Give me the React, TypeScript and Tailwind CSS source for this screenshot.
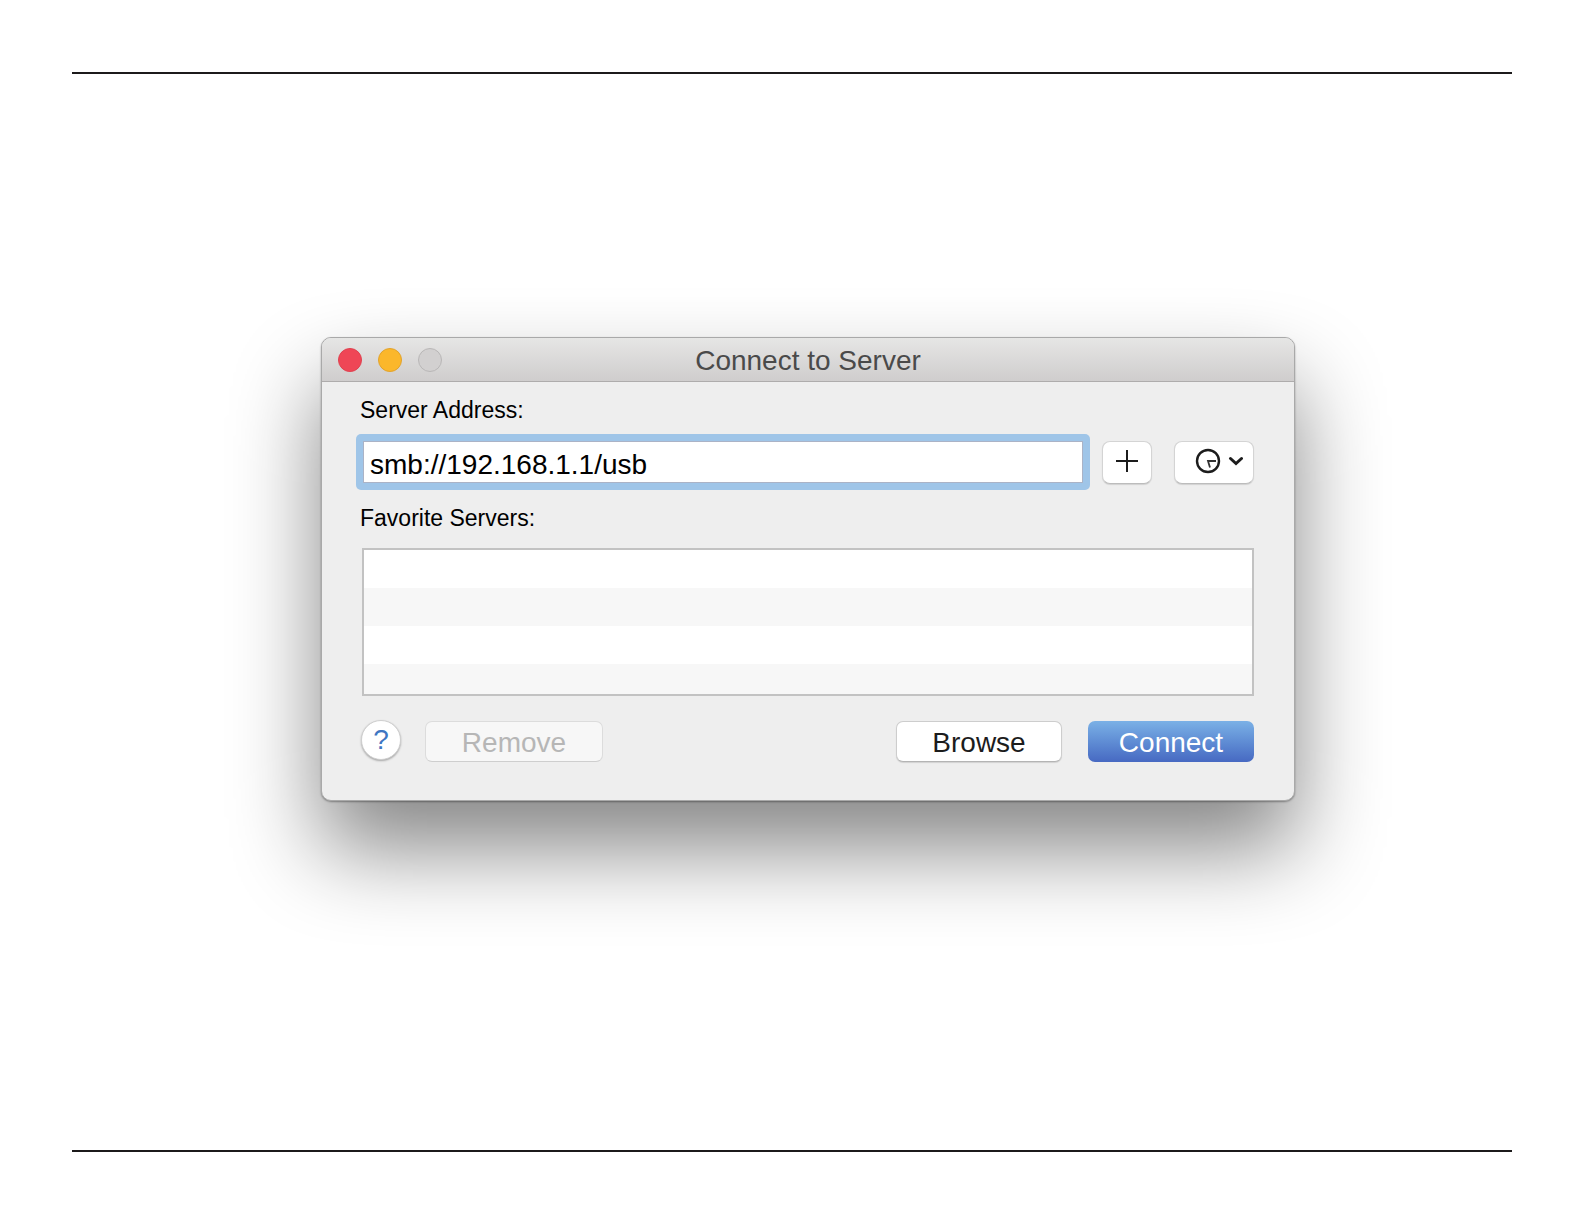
import { useState } from "react";

const rows = ["bg-white", "bg-[#f7f7f7]", "bg-white", "bg-[#f7f7f7]"];

function TitleBar() {
  return (
    <header className="relative flex h-11 items-center justify-center rounded-t-[9px] border-b border-[#aeacac] bg-gradient-to-b from-[#e6e6e5] to-[#cfcdcd]">
      <div className="absolute left-4 flex gap-4">
        <button type="button" aria-label="Close" className="size-6 rounded-full border border-[#e0414f] bg-[#ef4656]" />
        <button type="button" aria-label="Minimize" className="size-6 rounded-full border border-[#e2a32c] bg-[#fbb72b]" />
        <button type="button" aria-label="Zoom" disabled className="size-6 rounded-full border border-[#b9b7b7] bg-[#d2d0d0]" />
      </div>
      <h1 className="pt-[2px] text-[28px] leading-8 text-[#4a4a4a]">Connect to Server</h1>
    </header>
  );
}

function PlusIcon() {
  return (
    <svg viewBox="0 0 24 24" className="size-6" fill="none" stroke="#1c1c1c" strokeWidth="2">
      <path d="M12 1v22M1 12h22" />
    </svg>
  );
}

function RecentIcon() {
  return (
    <svg viewBox="0 0 48 26" className="h-[26px] w-12" fill="none" stroke="#1c1c1c">
      <circle cx="13" cy="13" r="11" strokeWidth="2.4" />
      <path d="M21 13H13l2 6.500" strokeWidth="1.8" stroke="#333" />
      <path d="M35.500 10.500l5.500 5 5.500-5" strokeWidth="3" strokeLinecap="round" />
    </svg>
  );
}

export default function App() {
  const [address, setAddress] = useState("smb://192.168.1.1/usb");

  return (
    <div className="flex min-h-screen flex-col bg-white p-[72px] font-['Liberation_Sans',Arial,sans-serif] text-black">
      <main className="flex grow flex-col items-center border-y-2 border-[#1c1a1b] pt-[263px] pl-8">
        <section className="w-full max-w-[974px] rounded-[10px] border border-[#a9a9a9] bg-[#eeeeee] shadow-[0_48px_88px_rgba(0,0,0,0.48),0_1px_2px_rgba(0,0,0,0.35)]">
          <TitleBar />
          <form className="flex flex-col px-[34px] pt-[14px] pb-[38px]" onSubmit={(e) => e.preventDefault()}>
            <label htmlFor="address" className="pl-1 text-[23px] leading-7">
              Server Address:
            </label>
            <div className="mt-[10px] flex items-center">
              <div className="flex h-14 grow rounded-[5px] bg-[#9fc5e8] p-[7px]">
                <input
                  id="address"
                  type="text"
                  value={address}
                  onChange={(e) => setAddress(e.target.value)}
                  className="w-full border border-[#abb3c6] bg-white px-[6px] pt-[6px] text-[28px] outline-none"
                />
              </div>
              <button
                type="button"
                aria-label="Add to favorites"
                className="ml-3 flex h-[43px] w-[50px] shrink-0 items-center justify-center rounded-[8px] border border-[#d4d4d4] border-b-[#bcbcbc] bg-white pb-[2px] shadow-[0_1px_1px_rgba(0,0,0,0.12)]"
              >
                <PlusIcon />
              </button>
              <button
                type="button"
                aria-label="Recent servers"
                aria-haspopup="menu"
                className="mr-[6px] ml-[22px] flex h-[43px] w-20 shrink-0 items-center justify-end rounded-[8px] border border-[#d4d4d4] border-b-[#bcbcbc] bg-white pr-[10px] pb-[2px] shadow-[0_1px_1px_rgba(0,0,0,0.12)]"
              >
                <RecentIcon />
              </button>
            </div>

            <h2 id="favorites" className="mt-[14px] pl-1 text-[23px] leading-7">
              Favorite Servers:
            </h2>
            <ul aria-labelledby="favorites" className="mx-[6px] mt-4 h-[148px] overflow-hidden border-2 border-[#c2c2c2] bg-white">
              {rows.map((row, index) => (
                <li key={index} className={`h-[38px] ${row}`} />
              ))}
            </ul>

            <div className="mr-[6px] ml-[5px] mt-6 flex h-[42px] items-start text-[28px] leading-8">
              <button
                type="button"
                aria-label="Help"
                className="flex size-10 items-center justify-center rounded-full border border-[#cfcfcf] bg-white text-[#3f76c2] shadow-[0_1px_2px_rgba(0,0,0,0.3)]"
              >
                ?
              </button>
              <button
                type="button"
                disabled
                className="mt-px ml-6 h-[41px] w-[178px] rounded-[7px] border border-[#dcdcdc] border-b-[#cecece] bg-[#f7f7f7] pt-[2px] text-[#b6b6b6]"
              >
                Remove
              </button>
              <button
                type="button"
                className="mt-px ml-auto h-[41px] w-[166px] rounded-[7px] border border-[#cdcdcd] border-b-[#b4b4b4] bg-white pt-[2px] text-[#1c1c1c] shadow-[0_1px_1px_rgba(0,0,0,0.12)]"
              >
                Browse
              </button>
              <button
                type="submit"
                className="mt-px ml-[26px] h-[41px] w-[166px] rounded-[7px] bg-gradient-to-b from-[#7bb1e6] to-[#4769c2] pt-[2px] text-white"
              >
                Connect
              </button>
            </div>
          </form>
        </section>
      </main>
    </div>
  );
}
